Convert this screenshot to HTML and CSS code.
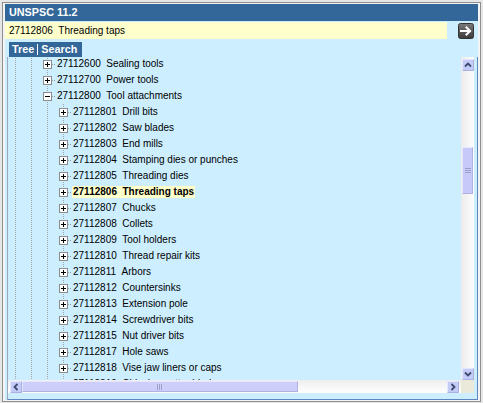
FILE: index.html
```html
<!DOCTYPE html>
<html>
<head>
<meta charset="utf-8">
<link rel="stylesheet" href="styles.css">
</head>
<body>
<div class="window">
  <div class="title">UNSPSC 11.2</div>
  <div class="content">
    <div class="searchrow">
      <div class="field">27112806&nbsp;&nbsp;Threading taps</div>
      <button class="go" type="button">
        <svg width="16" height="16" viewBox="0 0 16 16">
          <defs>
            <linearGradient id="gb" x1="0" y1="0" x2="0" y2="1">
              <stop offset="0" stop-color="#7a7a7a"/>
              <stop offset="1" stop-color="#3a3a3a"/>
            </linearGradient>
          </defs>
          <rect x="0.5" y="0.5" width="15" height="15" rx="2" fill="url(#gb)" stroke="#333"/>
          <path d="M3 8H12M8.5 4.5L12 8L8.5 11.5" fill="none" stroke="#fff" stroke-width="2" stroke-linecap="square"/>
        </svg>
      </button>
    </div>
    <div class="tabs"><span>Tree</span><span class="sep"></span><span>Search</span></div>
    <div class="frame">
      <div class="viewport">
        <div class="tree">
          <div class="row"><span class="cell line"></span><span class="cell line"></span><span class="cell conn"><span class="box plus"></span></span><span class="label">27112600&nbsp;&nbsp;Sealing tools</span></div>
          <div class="row"><span class="cell line"></span><span class="cell line"></span><span class="cell conn"><span class="box plus"></span></span><span class="label">27112700&nbsp;&nbsp;Power tools</span></div>
          <div class="row"><span class="cell line"></span><span class="cell line"></span><span class="cell conn"><span class="box"></span></span><span class="label">27112800&nbsp;&nbsp;Tool attachments</span></div>
          <div class="row"><span class="cell line"></span><span class="cell line"></span><span class="cell line"></span><span class="cell conn"><span class="box plus"></span></span><span class="label">27112801&nbsp;&nbsp;Drill bits</span></div>
          <div class="row"><span class="cell line"></span><span class="cell line"></span><span class="cell line"></span><span class="cell conn"><span class="box plus"></span></span><span class="label">27112802&nbsp;&nbsp;Saw blades</span></div>
          <div class="row"><span class="cell line"></span><span class="cell line"></span><span class="cell line"></span><span class="cell conn"><span class="box plus"></span></span><span class="label">27112803&nbsp;&nbsp;End mills</span></div>
          <div class="row"><span class="cell line"></span><span class="cell line"></span><span class="cell line"></span><span class="cell conn"><span class="box plus"></span></span><span class="label">27112804&nbsp;&nbsp;Stamping dies or punches</span></div>
          <div class="row"><span class="cell line"></span><span class="cell line"></span><span class="cell line"></span><span class="cell conn"><span class="box plus"></span></span><span class="label">27112805&nbsp;&nbsp;Threading dies</span></div>
          <div class="row"><span class="cell line"></span><span class="cell line"></span><span class="cell line"></span><span class="cell conn"><span class="box plus"></span></span><span class="label"><span class="sel">27112806&nbsp;&nbsp;Threading taps</span></span></div>
          <div class="row"><span class="cell line"></span><span class="cell line"></span><span class="cell line"></span><span class="cell conn"><span class="box plus"></span></span><span class="label">27112807&nbsp;&nbsp;Chucks</span></div>
          <div class="row"><span class="cell line"></span><span class="cell line"></span><span class="cell line"></span><span class="cell conn"><span class="box plus"></span></span><span class="label">27112808&nbsp;&nbsp;Collets</span></div>
          <div class="row"><span class="cell line"></span><span class="cell line"></span><span class="cell line"></span><span class="cell conn"><span class="box plus"></span></span><span class="label">27112809&nbsp;&nbsp;Tool holders</span></div>
          <div class="row"><span class="cell line"></span><span class="cell line"></span><span class="cell line"></span><span class="cell conn"><span class="box plus"></span></span><span class="label">27112810&nbsp;&nbsp;Thread repair kits</span></div>
          <div class="row"><span class="cell line"></span><span class="cell line"></span><span class="cell line"></span><span class="cell conn"><span class="box plus"></span></span><span class="label">27112811&nbsp;&nbsp;Arbors</span></div>
          <div class="row"><span class="cell line"></span><span class="cell line"></span><span class="cell line"></span><span class="cell conn"><span class="box plus"></span></span><span class="label">27112812&nbsp;&nbsp;Countersinks</span></div>
          <div class="row"><span class="cell line"></span><span class="cell line"></span><span class="cell line"></span><span class="cell conn"><span class="box plus"></span></span><span class="label">27112813&nbsp;&nbsp;Extension pole</span></div>
          <div class="row"><span class="cell line"></span><span class="cell line"></span><span class="cell line"></span><span class="cell conn"><span class="box plus"></span></span><span class="label">27112814&nbsp;&nbsp;Screwdriver bits</span></div>
          <div class="row"><span class="cell line"></span><span class="cell line"></span><span class="cell line"></span><span class="cell conn"><span class="box plus"></span></span><span class="label">27112815&nbsp;&nbsp;Nut driver bits</span></div>
          <div class="row"><span class="cell line"></span><span class="cell line"></span><span class="cell line"></span><span class="cell conn"><span class="box plus"></span></span><span class="label">27112817&nbsp;&nbsp;Hole saws</span></div>
          <div class="row"><span class="cell line"></span><span class="cell line"></span><span class="cell line"></span><span class="cell conn"><span class="box plus"></span></span><span class="label">27112818&nbsp;&nbsp;Vise jaw liners or caps</span></div>
          <div class="row"><span class="cell line"></span><span class="cell line"></span><span class="cell line"></span><span class="cell conn"><span class="box plus"></span></span><span class="label">27112819&nbsp;&nbsp;Chisel or cutter blades</span></div>
        </div>
      </div>
      <div class="vscroll">
        <div class="sbtn">
          <svg width="12" height="12" viewBox="0 0 12 12"><path d="M3 7.5L6 4.5L9 7.5" fill="none" stroke="#3e4b70" stroke-width="1.8"/></svg>
        </div>
        <div class="vthumb">
          <svg width="6" height="6" viewBox="0 0 6 6"><path d="M0 0.5H6M0 2.5H6M0 4.5H6" stroke="#9da0c8" stroke-width="1"/></svg>
        </div>
        <div class="sbtn down">
          <svg width="12" height="12" viewBox="0 0 12 12"><path d="M3 4.5L6 7.5L9 4.5" fill="none" stroke="#3e4b70" stroke-width="1.8"/></svg>
        </div>
      </div>
      <div class="hscroll">
        <div class="sbtn">
          <svg width="12" height="12" viewBox="0 0 12 12"><path d="M7.5 3L4.5 6L7.5 9" fill="none" stroke="#3e4b70" stroke-width="1.8"/></svg>
        </div>
        <div class="hthumb">
          <svg width="6" height="6" viewBox="0 0 6 6"><path d="M0.5 0V6M2.5 0V6M4.5 0V6" stroke="#9da0c8" stroke-width="1"/></svg>
        </div>
        <div class="sbtn right">
          <svg width="12" height="12" viewBox="0 0 12 12"><path d="M4.5 3L7.5 6L4.5 9" fill="none" stroke="#3e4b70" stroke-width="1.8"/></svg>
        </div>
      </div>
      <div class="corner"></div>
    </div>
  </div>
</div>
</body>
</html>
```

FILE: styles.css
```css
html, body {
  margin: 0;
  padding: 0;
  background: #e6e6e6;
  font-family: "Liberation Sans", Arial, sans-serif;
  font-size: 10px;
  color: #000;
}

.window {
  box-sizing: border-box;
  width: 479px;
  height: 400px;
  margin: 2px 2px 0 2px;
  border: 1px solid #8e8e8e;
  padding: 1px 2px 1px 2px;
  background: #f4f4f4;
  display: flex;
  flex-direction: column;
}

.title {
  height: 17px;
  flex: none;
  background: #336699;
  color: #fff;
  font-weight: bold;
  font-size: 10.8px;
  line-height: 17px;
  padding-left: 4px;
}

.content {
  flex: 1;
  background: #cceeff;
  display: flex;
  flex-direction: column;
  padding-top: 1px;
}

.searchrow {
  height: 17px;
  display: flex;
  align-items: center;
  flex: none;
}

.field {
  width: 442px;
  height: 17px;
  background: #ffffcc;
  line-height: 17px;
  padding-left: 4px;
  box-sizing: border-box;
  white-space: nowrap;
}

.go {
  margin: 1px 0 0 11px;
  padding: 0;
  border: 0;
  background: none;
  width: 16px;
  height: 16px;
  display: block;
}
.go svg { display: block; }

.tabs {
  margin: 3px 0 0 4px;
  width: 73px;
  height: 15px;
  flex: none;
  background: #336699;
  color: #fff;
  font-weight: bold;
  font-size: 10.8px;
  line-height: 15px;
  display: flex;
  align-items: center;
  padding-left: 3px;
  box-sizing: border-box;
}
.tabs .sep {
  width: 1px;
  height: 11px;
  background: #fff;
  margin: 0 3px;
}

.frame {
  flex: 1;
  margin-left: 2px;
  border-left: 1px solid #9aa8b8;
  border-right: 1px solid #5d86c0;
  border-bottom: 1px solid #5d86c0;
  display: grid;
  grid-template-columns: 453px 13px;
  grid-template-rows: 323px 13px;
  align-content: start;
  min-height: 0;
}

.viewport {
  overflow: hidden;
  position: relative;
}

.tree {
  margin-top: -1px;
}

.row {
  height: 16px;
  display: flex;
  white-space: nowrap;
}

.cell {
  width: 16px;
  height: 16px;
  flex: none;
  position: relative;
}

.line {
  background: repeating-linear-gradient(to bottom, #a3a3a3 0 1px, transparent 1px 2px) no-repeat 7px 0 / 1px 16px;
}

.conn {
  background:
    repeating-linear-gradient(to bottom, #a3a3a3 0 1px, transparent 1px 2px) no-repeat 7px 0 / 1px 16px,
    repeating-linear-gradient(to right, #a3a3a3 0 1px, transparent 1px 2px) no-repeat 12px 8px / 4px 1px;
}

.box {
  position: absolute;
  left: 3px;
  top: 4px;
  width: 9px;
  height: 9px;
  box-sizing: border-box;
  border: 1px solid #8c8c8c;
  background: #fff;
}
.box::before {
  content: "";
  position: absolute;
  left: 1px;
  top: 3px;
  width: 5px;
  height: 1px;
  background: #000;
}
.plus::after {
  content: "";
  position: absolute;
  left: 3px;
  top: 1px;
  width: 1px;
  height: 5px;
  background: #000;
}

.label {
  padding-left: 1px;
  line-height: 16px;
}

.sel {
  display: inline-block;
  background: #ffffcc;
  font-weight: bold;
  line-height: 12px;
  padding: 0 1px;
  margin-left: -1px;
  vertical-align: top;
  margin-top: 2px;
}

.vscroll {
  background: linear-gradient(to right, #ebebeb, #fdfdfd);
  display: flex;
  flex-direction: column;
  align-items: center;
}

.sbtn {
  width: 12px;
  height: 12px;
  box-sizing: border-box;
  background: #c3cbf6;
  border: 1px solid #e3e7ff;
  border-right-color: #a9b1e0;
  border-bottom-color: #a9b1e0;
  border-radius: 1px;
  display: flex;
  align-items: center;
  justify-content: center;
  flex: none;
}
.sbtn svg { display: block; margin: -1px; }

.vscroll .sbtn { margin-top: 2px; }
.vscroll .sbtn.down { margin-top: auto; }

.vthumb {
  width: 11px;
  height: 47px;
  margin-top: 76px;
  box-sizing: border-box;
  background: #c7c9f8;
  border: 1px solid #e6e7ff;
  border-right-color: #aeb1e2;
  border-bottom-color: #aeb1e2;
  display: flex;
  align-items: center;
  justify-content: center;
  flex: none;
}

.hscroll {
  background: linear-gradient(to bottom, #eeeeee, #ffffff);
  display: flex;
  align-items: center;
  padding: 0 2px;
}

.hthumb {
  width: 276px;
  height: 11px;
  box-sizing: border-box;
  background: #cdcffa;
  border: 1px solid #e6e7ff;
  border-right-color: #aeb1e2;
  border-bottom-color: #aeb1e2;
  display: flex;
  align-items: center;
  justify-content: center;
  flex: none;
}

.hscroll .sbtn.right { margin-left: auto; }

.corner {
  background: #ebe9da;
}
```
